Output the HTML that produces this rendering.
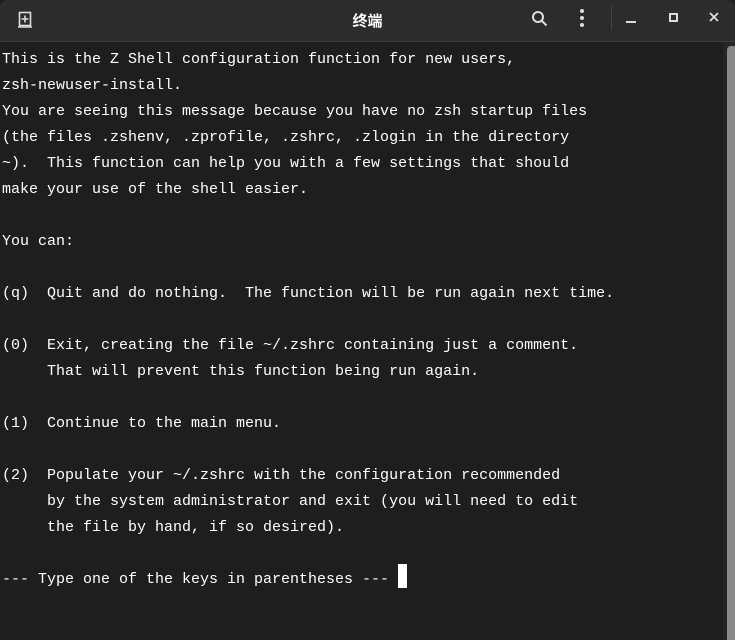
<!DOCTYPE html>
<html><head><meta charset="utf-8"><style>
html,body{margin:0;padding:0;width:735px;height:640px;overflow:hidden;background:#1e1e1e}
.hdr{position:absolute;left:0;top:0;width:735px;height:41px;background:#2c2c2c;border-bottom:1px solid #3c3c3c;border-radius:8px 8px 0 0}
.title{position:absolute;left:0;width:735px;top:10px;text-align:center;color:#fff;font:bold 15px "Liberation Sans","Noto Sans CJK SC",sans-serif}
.ic{position:absolute;color:#ddd}
pre{position:absolute;left:2px;top:47px;margin:0;font:15px/26px "Liberation Mono",monospace;color:#fff}
.cur{position:absolute;left:398px;top:564px;width:9px;height:24px;background:#fff}
.track{position:absolute;left:723px;top:42px;width:12px;height:598px;background:#252525}
.thumb{position:absolute;left:727px;top:46px;width:8px;height:594px;background:#8a8a8a;border-radius:4px 0 0 0}
</style></head><body>
<div class="hdr"></div>
<div class="title">终端</div>
<svg class="ic" style="left:16px;top:10px" width="20" height="20" viewBox="0 0 20 20"><rect x="3.5" y="2.5" width="11" height="13" fill="none" stroke="#ddd" stroke-width="1.6"/><path d="M9 5.5v7M5.5 9h7M2 17h14" stroke="#ddd" stroke-width="1.6"/></svg>
<svg class="ic" style="left:530px;top:9px" width="20" height="20" viewBox="0 0 20 20"><circle cx="8" cy="8" r="5" fill="none" stroke="#ddd" stroke-width="2"/><path d="M11.5 11.5l5 5" stroke="#ddd" stroke-width="2"/></svg>
<svg class="ic" style="left:572px;top:8px" width="20" height="22" viewBox="0 0 20 22"><circle cx="10" cy="3" r="2" fill="#ddd"/><circle cx="10" cy="10" r="2" fill="#ddd"/><circle cx="10" cy="17" r="2" fill="#ddd"/></svg>
<div style="position:absolute;left:611px;top:6px;width:1px;height:24px;background:#444"></div>
<div style="position:absolute;left:626px;top:21px;width:10px;height:2px;background:#ddd"></div>
<div style="position:absolute;left:669px;top:13px;width:5px;height:5px;border:2px solid #ddd"></div>
<svg class="ic" style="left:709px;top:12px" width="10" height="10" viewBox="0 0 10 10"><path d="M1 1l8 8M9 1l-8 8" stroke="#ddd" stroke-width="1.8"/></svg>
<pre>This is the Z Shell configuration function for new users,
zsh-newuser-install.
You are seeing this message because you have no zsh startup files
(the files .zshenv, .zprofile, .zshrc, .zlogin in the directory
~).  This function can help you with a few settings that should
make your use of the shell easier.

You can:

(q)  Quit and do nothing.  The function will be run again next time.

(0)  Exit, creating the file ~/.zshrc containing just a comment.
     That will prevent this function being run again.

(1)  Continue to the main menu.

(2)  Populate your ~/.zshrc with the configuration recommended
     by the system administrator and exit (you will need to edit
     the file by hand, if so desired).

--- Type one of the keys in parentheses --- </pre>
<div class="cur"></div>
<div class="track"></div><div class="thumb"></div>
</body></html>
